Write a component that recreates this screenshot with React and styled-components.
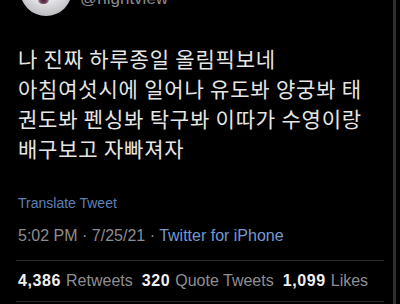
import React from "react";
import styled, { createGlobalStyle } from "styled-components";

const Global = createGlobalStyle`
  html, body { margin: 0; padding: 0; background: #000; }
  body { font-family: "Liberation Sans", Arial, sans-serif; }
`;

const Screen = styled.div`
  width: 400px;
  height: 304px;
  overflow: hidden;
  background: #000;
  display: flex;
`;

const Column = styled.div`
  width: 393px;
  flex: none;
  display: flex;
  flex-direction: column;
`;

const Edge = styled.div`
  width: 3px;
  flex: none;
  background: #2e2e30;
`;

const Header = styled.div`
  display: flex;
  align-items: flex-end;
  margin-top: -36px;
  height: 52px;
`;

const Avatar = styled.div`
  width: 52px;
  height: 52px;
  border-radius: 50%;
  margin-left: 20px;
  flex: none;
  position: relative;
  background: radial-gradient(circle at 50% 35%, #fafafa 0%, #e6e6e9 45%, #bdbdc2 78%, #85858b 100%);
`;

const Spot = styled.div`
  position: absolute;
  left: 18px;
  top: 33px;
  width: 11px;
  height: 7px;
  border-radius: 50%;
  background: radial-gradient(circle, #4a1f3a 0%, #7a4a62 55%, rgba(200,180,190,0) 100%);
`;

const Handle = styled.div`
  margin-left: 8px;
  color: #8a8b8f;
  font-size: 17px;
  line-height: 20px;
  margin-bottom: 7px;
`;

const Body = styled.p`
  margin: 27px 0 0 18px;
  font-family: "Noto Sans CJK KR", "Noto Sans", sans-serif;
  font-size: 21px;
  line-height: 30px;
  color: #e6e6e6;
  letter-spacing: 0.8px;
`;

const Translate = styled.div`
  margin: 32px 0 0 18px;
  font-size: 14px;
  line-height: 16px;
  color: #5e80b8;
`;

const Meta = styled.div`
  margin: 15px 0 0 18px;
  font-size: 16px;
  line-height: 20px;
  color: #8c8d91;
`;

const Source = styled.span`
  color: #7399d3;
`;

const Divider = styled.div`
  height: 1px;
  margin: ${(p) => p.$top}px 9px 0 16px;
  background: #2a2a2c;
`;

const Stats = styled.div`
  display: flex;
  gap: 9px;
  margin: 10px 0 0 18px;
  font-size: 16px;
  line-height: 20px;
  white-space: nowrap;
`;

const Stat = styled.span`
  color: #8e8f93;
`;

const Num = styled.b`
  color: #f0f0f0;
  font-weight: 700;
  letter-spacing: 0.6px;
  margin-right: 5px;
`;

export default function App() {
  return (
    <>
      <Global />
      <Screen>
        <Column>
          <Header>
            <Avatar>
              <Spot />
            </Avatar>
            <Handle>@nightview</Handle>
          </Header>
          <Body>
            나 진짜 하루종일 올림픽보네
            <br />
            아침여섯시에 일어나 유도봐 양궁봐 태
            <br />
            권도봐 펜싱봐 탁구봐 이따가 수영이랑
            <br />
            배구보고 자빠져자
          </Body>
          <Translate>Translate Tweet</Translate>
          <Meta>
            5:02 PM · 7/25/21 · <Source>Twitter for iPhone</Source>
          </Meta>
          <Divider $top={14} />
          <Stats>
            <Stat>
              <Num>4,386</Num>Retweets
            </Stat>
            <Stat>
              <Num>320</Num>Quote Tweets
            </Stat>
            <Stat>
              <Num>1,099</Num>Likes
            </Stat>
          </Stats>
          <Divider $top={10} />
        </Column>
        <Edge />
      </Screen>
    </>
  );
}
